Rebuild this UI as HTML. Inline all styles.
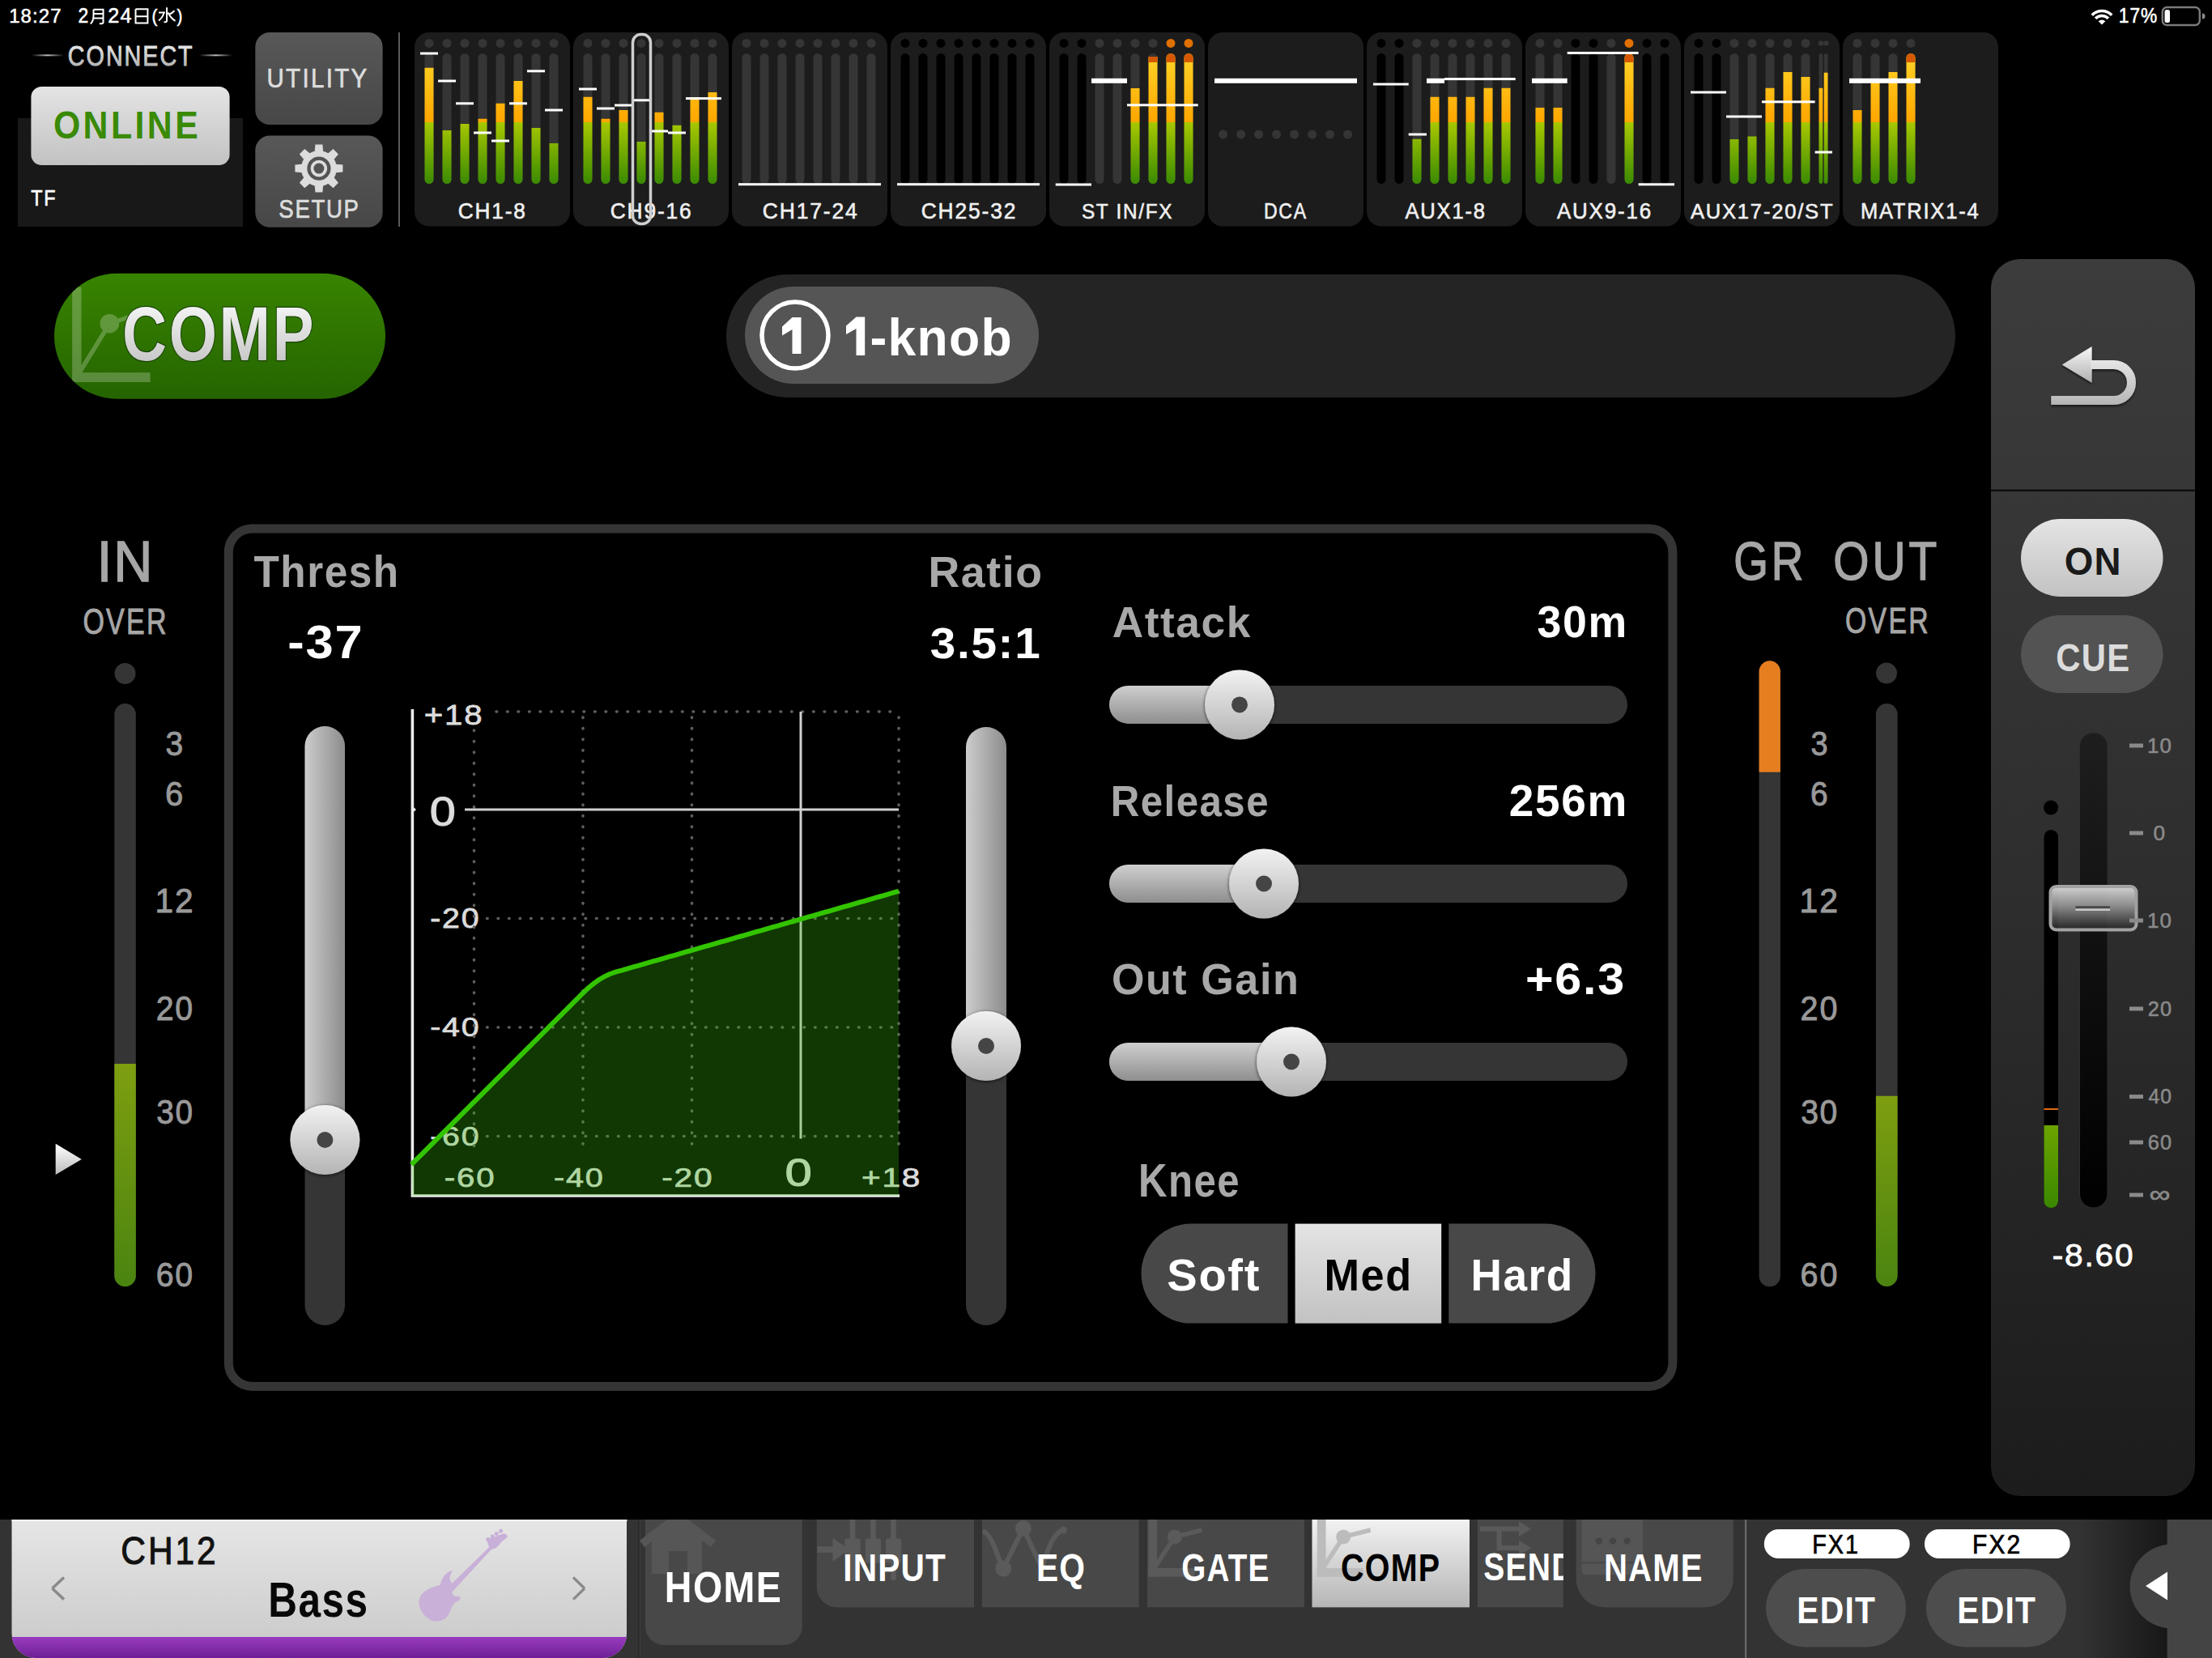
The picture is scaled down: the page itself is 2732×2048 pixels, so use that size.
<!DOCTYPE html>
<html><head><meta charset="utf-8"><style>
html,body{margin:0;padding:0;background:#000;}
body{width:2732px;height:2048px;overflow:hidden;}
svg{display:block;font-family:"Liberation Sans",sans-serif;}
</style></head><body>
<svg width="2732" height="2048" viewBox="0 0 2732 2048">
<defs><linearGradient id="gLight" x1="0" y1="0" x2="0" y2="1"><stop offset="0" stop-color="#e4e4e4"/><stop offset="1" stop-color="#c2c2c2"/></linearGradient>
<linearGradient id="gBtnDark" x1="0" y1="0" x2="0" y2="1"><stop offset="0" stop-color="#585858"/><stop offset="1" stop-color="#474747"/></linearGradient>
<linearGradient id="gCompPill" x1="0" y1="0" x2="0" y2="1"><stop offset="0" stop-color="#388400"/><stop offset="1" stop-color="#256400"/></linearGradient>
<linearGradient id="gCompTxt" x1="0" y1="0" x2="0" y2="1"><stop offset="0" stop-color="#ffffff"/><stop offset="1" stop-color="#bdbdbd"/></linearGradient>
<linearGradient id="gConnect" x1="0" y1="0" x2="0" y2="1"><stop offset="0" stop-color="#f4f4f4"/><stop offset="1" stop-color="#a8a8a8"/></linearGradient>
<linearGradient id="gMeter" x1="0" y1="66" x2="0" y2="227" gradientUnits="userSpaceOnUse"><stop offset="0" stop-color="#ffd426"/><stop offset="0.528" stop-color="#ffa600"/><stop offset="0.528" stop-color="#a8c800"/><stop offset="1" stop-color="#3a8a00"/></linearGradient>
<linearGradient id="gInMeter" x1="0" y1="0" x2="0" y2="1"><stop offset="0" stop-color="#7e9e10"/><stop offset="1" stop-color="#4a8410"/></linearGradient>
<linearGradient id="gSliderL" x1="0" y1="0" x2="0" y2="1"><stop offset="0" stop-color="#cfcfcf"/><stop offset="1" stop-color="#8e8e8e"/></linearGradient>
<linearGradient id="gVSlider" x1="0" y1="0" x2="1" y2="0"><stop offset="0" stop-color="#cccccc"/><stop offset="1" stop-color="#8c8c8c"/></linearGradient>
<linearGradient id="gKnob" x1="0" y1="0" x2="0" y2="1"><stop offset="0" stop-color="#f2f2f2"/><stop offset="1" stop-color="#b4b4b4"/></linearGradient>
<linearGradient id="gArrow" x1="0" y1="0" x2="0" y2="1"><stop offset="0" stop-color="#f8f8f8"/><stop offset="1" stop-color="#b0b0b0"/></linearGradient>
<linearGradient id="gRightPanel" x1="0" y1="0" x2="0" y2="1"><stop offset="0" stop-color="#3c3c3c"/><stop offset="0.5" stop-color="#2e2e2e"/><stop offset="1" stop-color="#1c1c1c"/></linearGradient>
<linearGradient id="gFaderKnob" x1="0" y1="0" x2="0" y2="1"><stop offset="0" stop-color="#c4c4c4"/><stop offset="0.5" stop-color="#6a6a6a"/><stop offset="0.75" stop-color="#363636"/><stop offset="1" stop-color="#5a5a5a"/></linearGradient>
<linearGradient id="gNameBar" x1="0" y1="0" x2="0" y2="1"><stop offset="0" stop-color="#e6e6e6"/><stop offset="1" stop-color="#c8c8c8"/></linearGradient>
<linearGradient id="gPurple" x1="0" y1="0" x2="0" y2="1"><stop offset="0" stop-color="#9a3cc0"/><stop offset="1" stop-color="#6e1e96"/></linearGradient>
<linearGradient id="gShadowR" x1="0" y1="0" x2="1" y2="0"><stop offset="0" stop-color="rgba(0,0,0,0)"/><stop offset="1" stop-color="rgba(0,0,0,0.55)"/></linearGradient>
<linearGradient id="gLineL" x1="0" y1="0" x2="1" y2="0"><stop offset="0" stop-color="rgba(200,200,200,0)"/><stop offset="0.5" stop-color="#bdbdbd"/><stop offset="1" stop-color="rgba(200,200,200,0)"/></linearGradient>
<linearGradient id="gArrowU" gradientUnits="userSpaceOnUse" x1="0" y1="428" x2="0" y2="500"><stop offset="0" stop-color="#f5f5f5"/><stop offset="1" stop-color="#b5b5b5"/></linearGradient>
<filter id="fShadow" x="-20%" y="-20%" width="140%" height="140%"><feGaussianBlur in="SourceAlpha" stdDeviation="1.5"/><feOffset dy="1.5"/><feComponentTransfer><feFuncA type="linear" slope="0.6"/></feComponentTransfer><feMerge><feMergeNode/><feMergeNode in="SourceGraphic"/></feMerge></filter>
<linearGradient id="gTrack" x1="0" y1="0" x2="0" y2="1"><stop offset="0" stop-color="#1e1e1e"/><stop offset="1" stop-color="#000000"/></linearGradient>
<linearGradient id="gFMeter" x1="0" y1="0" x2="0" y2="1"><stop offset="0" stop-color="#6ca400"/><stop offset="1" stop-color="#3a8800"/></linearGradient>
<linearGradient id="gFK2" x1="0" y1="0" x2="0" y2="1"><stop offset="0" stop-color="rgba(215,215,215,0.97)"/><stop offset="0.45" stop-color="rgba(150,150,150,0.9)"/><stop offset="1" stop-color="rgba(35,35,35,0.85)"/></linearGradient>
<linearGradient id="gTri" x1="0" y1="0" x2="0" y2="1"><stop offset="0" stop-color="#ffffff"/><stop offset="1" stop-color="#bcbcbc"/></linearGradient>
<filter id="fKnob" x="-30%" y="-30%" width="160%" height="160%"><feGaussianBlur in="SourceAlpha" stdDeviation="2"/><feOffset dy="1"/><feComponentTransfer><feFuncA type="linear" slope="0.7"/></feComponentTransfer><feMerge><feMergeNode/><feMergeNode in="SourceGraphic"/></feMerge></filter>
<linearGradient id="gNavSel" x1="0" y1="0" x2="0" y2="1"><stop offset="0" stop-color="#f2f2f2"/><stop offset="1" stop-color="#b6b6b6"/></linearGradient></defs>
<rect x="0" y="0" width="2732" height="2048" fill="#000"/>
<text transform="translate(11.20,27.95) scale(0.9774,1)" font-size="24.52" fill="#fff" letter-spacing="1.10" stroke="#fff" stroke-width="0.54">18:27</text>
<text transform="translate(96.46,28.20) scale(0.9189,1)" font-size="24.87" fill="#fff" letter-spacing="1.12" stroke="#fff" stroke-width="0.55">2</text>
<text transform="translate(133.24,28.20) scale(1.0148,1)" font-size="24.87" fill="#fff" letter-spacing="1.12" stroke="#fff" stroke-width="0.55">24</text>
<text transform="translate(187.51,26.78) scale(0.9049,1)" font-size="22.73" fill="#fff" letter-spacing="1.02" stroke="#fff" stroke-width="0.50">(</text>
<text transform="translate(218.45,26.78) scale(0.9049,1)" font-size="22.73" fill="#fff" letter-spacing="1.02" stroke="#fff" stroke-width="0.50">)</text>
<path d="M115.5,11.8 H127.5 V27.5 Q127.5,29.3 125.2,29.3 H122.8 M115.5,11.8 V19 Q115.5,26 111.8,29.5 M115.5,17 H127.5 M115.5,22.5 H127.5" fill="none" stroke="#fff" stroke-width="2"/>
<path d="M167.5,11.3 H182.4 V29.5 M167.5,11.3 V29.5 M167.5,20.2 H182.4 M167.5,28.5 H182.4" fill="none" stroke="#fff" stroke-width="2"/>
<path d="M206,9.2 V25.8 Q206,27.2 204.2,27.2 H202.5 M196,15.5 H202.8 Q200.5,22 196,25.5 M215.5,13.3 Q212.5,16.5 208.5,18 M207.5,15.5 Q210.5,22 216.5,25.8" fill="none" stroke="#fff" stroke-width="2"/>
<path d="M2583.77,18.69 A17.00,17.00 0 0 1 2608.23,18.69" fill="none" stroke="#fff" stroke-width="3.6"/>
<path d="M2588.09,22.86 A11.00,11.00 0 0 1 2603.91,22.86" fill="none" stroke="#fff" stroke-width="3.6"/>
<path d="M2596.00,30.50 L2591.70,26.20 A6,6 0 0 1 2600.30,26.20 Z" fill="#fff"/>
<text transform="translate(2616.80,28.07) scale(0.8988,1)" font-size="25.29" fill="#fff" letter-spacing="1.14" stroke="#fff" stroke-width="0.56">17%</text>
<rect x="2670.80" y="9.00" width="46.00" height="22.00" rx="5.50" fill="none" stroke="#7a7a7a" stroke-width="2.4"/>
<rect x="2673.50" y="12.00" width="6.50" height="16.00" rx="2.50" fill="#fff"/>
<path d="M2720,16.5 A3.5,3.5 0 0 1 2720,23.5 Z" fill="#8a8a8a"/>
<rect x="22.00" y="146.00" width="278.00" height="134.00" rx="0.00" fill="#181818"/>
<rect x="38.40" y="107.00" width="245.20" height="97.00" rx="13.00" fill="url(#gLight)"/>
<text transform="translate(65.89,171.31) scale(0.8804,1)" font-size="48.62" font-weight="bold" fill="#3a8a06" letter-spacing="3.89">ONLINE</text>
<text transform="translate(83.87,80.66) scale(0.8315,1)" font-size="34.49" fill="url(#gConnect)" letter-spacing="2.41" stroke="url(#gConnect)" stroke-width="0.9">CONNECT</text>
<rect x="38.80" y="67.30" width="40.00" height="2.00" rx="0.00" fill="url(#gLineL)"/>
<rect x="246.00" y="67.30" width="41.00" height="2.00" rx="0.00" fill="url(#gLineL)"/>
<text transform="translate(38.27,254.00) scale(0.8490,1)" font-size="27.64" fill="#fff" letter-spacing="1.93" stroke="#fff" stroke-width="0.61">TF</text>
<rect x="315.30" y="40.00" width="157.30" height="114.00" rx="18.00" fill="url(#gBtnDark)"/>
<text transform="translate(329.42,108.26) scale(0.8710,1)" font-size="33.84" fill="#dcdcdc" letter-spacing="2.71" stroke="#dcdcdc" stroke-width="0.74">UTILITY</text>
<rect x="315.30" y="167.40" width="157.30" height="113.40" rx="18.00" fill="url(#gBtnDark)"/>
<text transform="translate(344.36,269.38) scale(0.8595,1)" font-size="32.08" fill="#dcdcdc" letter-spacing="1.93" stroke="#dcdcdc" stroke-width="0.71">SETUP</text>
<g transform="translate(393.90,208.10)">
<path d="M-4.5,-29.5 H4.5 L5.5,-18 H-5.5 Z" fill="#dcdcdc" transform="rotate(0)"/>
<path d="M-4.5,-29.5 H4.5 L5.5,-18 H-5.5 Z" fill="#dcdcdc" transform="rotate(45)"/>
<path d="M-4.5,-29.5 H4.5 L5.5,-18 H-5.5 Z" fill="#dcdcdc" transform="rotate(90)"/>
<path d="M-4.5,-29.5 H4.5 L5.5,-18 H-5.5 Z" fill="#dcdcdc" transform="rotate(135)"/>
<path d="M-4.5,-29.5 H4.5 L5.5,-18 H-5.5 Z" fill="#dcdcdc" transform="rotate(180)"/>
<path d="M-4.5,-29.5 H4.5 L5.5,-18 H-5.5 Z" fill="#dcdcdc" transform="rotate(225)"/>
<path d="M-4.5,-29.5 H4.5 L5.5,-18 H-5.5 Z" fill="#dcdcdc" transform="rotate(270)"/>
<path d="M-4.5,-29.5 H4.5 L5.5,-18 H-5.5 Z" fill="#dcdcdc" transform="rotate(315)"/>
<circle cx="0.00" cy="0.00" r="22.00" fill="#dcdcdc"/>
<circle cx="0.00" cy="0.00" r="14.60" fill="#545454"/>
<circle cx="0.00" cy="0.00" r="10.30" fill="#dcdcdc"/>
<circle cx="0.00" cy="0.00" r="6.50" fill="#545454"/>
</g>
<rect x="492.00" y="40.00" width="2.00" height="240.00" rx="0.00" fill="#5a5a5a"/>
<rect x="512.00" y="40.00" width="192.00" height="239.50" rx="18.00" fill="#1c1c1c"/>
<rect x="708.00" y="40.00" width="192.00" height="239.50" rx="18.00" fill="#1c1c1c"/>
<rect x="904.00" y="40.00" width="192.00" height="239.50" rx="18.00" fill="#1c1c1c"/>
<rect x="1100.00" y="40.00" width="192.00" height="239.50" rx="18.00" fill="#1c1c1c"/>
<rect x="1296.00" y="40.00" width="192.00" height="239.50" rx="18.00" fill="#1c1c1c"/>
<rect x="1492.00" y="40.00" width="192.00" height="239.50" rx="18.00" fill="#1c1c1c"/>
<rect x="1688.00" y="40.00" width="192.00" height="239.50" rx="18.00" fill="#1c1c1c"/>
<rect x="1884.00" y="40.00" width="192.00" height="239.50" rx="18.00" fill="#1c1c1c"/>
<rect x="2080.00" y="40.00" width="192.00" height="239.50" rx="18.00" fill="#1c1c1c"/>
<rect x="2276.00" y="40.00" width="192.00" height="239.50" rx="18.00" fill="#1c1c1c"/>
<circle cx="530.00" cy="53.40" r="5.50" fill="#353535"/>
<rect x="524.50" y="66.00" width="11.00" height="161.00" rx="5.50" fill="#353535"/>
<path d="M524.50,83.80 H535.50 V221.50 A5.50,5.50 0 0 1 524.50,221.50 Z" fill="url(#gMeter)"/>
<circle cx="552.00" cy="53.40" r="5.50" fill="#353535"/>
<rect x="546.50" y="66.00" width="11.00" height="161.00" rx="5.50" fill="#353535"/>
<path d="M546.50,161.00 H557.50 V221.50 A5.50,5.50 0 0 1 546.50,221.50 Z" fill="url(#gMeter)"/>
<circle cx="574.00" cy="53.40" r="5.50" fill="#353535"/>
<rect x="568.50" y="66.00" width="11.00" height="161.00" rx="5.50" fill="#353535"/>
<path d="M568.50,153.00 H579.50 V221.50 A5.50,5.50 0 0 1 568.50,221.50 Z" fill="url(#gMeter)"/>
<circle cx="596.00" cy="53.40" r="5.50" fill="#353535"/>
<rect x="590.50" y="66.00" width="11.00" height="161.00" rx="5.50" fill="#353535"/>
<path d="M590.50,146.80 H601.50 V221.50 A5.50,5.50 0 0 1 590.50,221.50 Z" fill="url(#gMeter)"/>
<circle cx="618.00" cy="53.40" r="5.50" fill="#353535"/>
<rect x="612.50" y="66.00" width="11.00" height="161.00" rx="5.50" fill="#353535"/>
<path d="M612.50,127.80 H623.50 V221.50 A5.50,5.50 0 0 1 612.50,221.50 Z" fill="url(#gMeter)"/>
<circle cx="640.00" cy="53.40" r="5.50" fill="#353535"/>
<rect x="634.50" y="66.00" width="11.00" height="161.00" rx="5.50" fill="#353535"/>
<path d="M634.50,100.00 H645.50 V221.50 A5.50,5.50 0 0 1 634.50,221.50 Z" fill="url(#gMeter)"/>
<circle cx="662.00" cy="53.40" r="5.50" fill="#353535"/>
<rect x="656.50" y="66.00" width="11.00" height="161.00" rx="5.50" fill="#353535"/>
<path d="M656.50,158.00 H667.50 V221.50 A5.50,5.50 0 0 1 656.50,221.50 Z" fill="url(#gMeter)"/>
<circle cx="684.00" cy="53.40" r="5.50" fill="#353535"/>
<rect x="678.50" y="66.00" width="11.00" height="161.00" rx="5.50" fill="#353535"/>
<path d="M678.50,177.00 H689.50 V221.50 A5.50,5.50 0 0 1 678.50,221.50 Z" fill="url(#gMeter)"/>
<rect x="519.00" y="64.50" width="22.00" height="3.00" rx="0.00" fill="#ffffff"/>
<rect x="541.00" y="98.50" width="22.00" height="3.00" rx="0.00" fill="#ffffff"/>
<rect x="563.00" y="126.30" width="22.00" height="3.00" rx="0.00" fill="#ffffff"/>
<rect x="585.00" y="162.50" width="22.00" height="3.00" rx="0.00" fill="#ffffff"/>
<rect x="607.00" y="172.50" width="22.00" height="3.00" rx="0.00" fill="#ffffff"/>
<rect x="629.00" y="126.30" width="22.00" height="3.00" rx="0.00" fill="#ffffff"/>
<rect x="651.00" y="86.30" width="22.00" height="3.00" rx="0.00" fill="#ffffff"/>
<rect x="673.00" y="134.50" width="22.00" height="3.00" rx="0.00" fill="#ffffff"/>
<circle cx="726.00" cy="53.40" r="5.50" fill="#353535"/>
<rect x="720.50" y="66.00" width="11.00" height="161.00" rx="5.50" fill="#353535"/>
<path d="M720.50,119.80 H731.50 V221.50 A5.50,5.50 0 0 1 720.50,221.50 Z" fill="url(#gMeter)"/>
<circle cx="748.00" cy="53.40" r="5.50" fill="#353535"/>
<rect x="742.50" y="66.00" width="11.00" height="161.00" rx="5.50" fill="#353535"/>
<path d="M742.50,146.80 H753.50 V221.50 A5.50,5.50 0 0 1 742.50,221.50 Z" fill="url(#gMeter)"/>
<circle cx="770.00" cy="53.40" r="5.50" fill="#353535"/>
<rect x="764.50" y="66.00" width="11.00" height="161.00" rx="5.50" fill="#353535"/>
<path d="M764.50,136.00 H775.50 V221.50 A5.50,5.50 0 0 1 764.50,221.50 Z" fill="url(#gMeter)"/>
<circle cx="792.00" cy="53.40" r="5.50" fill="#353535"/>
<rect x="786.50" y="66.00" width="11.00" height="161.00" rx="5.50" fill="#353535"/>
<path d="M786.50,175.00 H797.50 V221.50 A5.50,5.50 0 0 1 786.50,221.50 Z" fill="url(#gMeter)"/>
<circle cx="814.00" cy="53.40" r="5.50" fill="#353535"/>
<rect x="808.50" y="66.00" width="11.00" height="161.00" rx="5.50" fill="#353535"/>
<path d="M808.50,138.80 H819.50 V221.50 A5.50,5.50 0 0 1 808.50,221.50 Z" fill="url(#gMeter)"/>
<circle cx="836.00" cy="53.40" r="5.50" fill="#353535"/>
<rect x="830.50" y="66.00" width="11.00" height="161.00" rx="5.50" fill="#353535"/>
<path d="M830.50,154.80 H841.50 V221.50 A5.50,5.50 0 0 1 830.50,221.50 Z" fill="url(#gMeter)"/>
<circle cx="858.00" cy="53.40" r="5.50" fill="#353535"/>
<rect x="852.50" y="66.00" width="11.00" height="161.00" rx="5.50" fill="#353535"/>
<path d="M852.50,120.00 H863.50 V221.50 A5.50,5.50 0 0 1 852.50,221.50 Z" fill="url(#gMeter)"/>
<circle cx="880.00" cy="53.40" r="5.50" fill="#353535"/>
<rect x="874.50" y="66.00" width="11.00" height="161.00" rx="5.50" fill="#353535"/>
<path d="M874.50,114.00 H885.50 V221.50 A5.50,5.50 0 0 1 874.50,221.50 Z" fill="url(#gMeter)"/>
<rect x="715.00" y="108.50" width="22.00" height="3.00" rx="0.00" fill="#ffffff"/>
<rect x="737.00" y="132.50" width="22.00" height="3.00" rx="0.00" fill="#ffffff"/>
<rect x="759.00" y="128.50" width="22.00" height="3.00" rx="0.00" fill="#ffffff"/>
<rect x="781.00" y="122.30" width="22.00" height="3.00" rx="0.00" fill="#ffffff"/>
<rect x="803.00" y="160.50" width="22.00" height="3.00" rx="0.00" fill="#ffffff"/>
<rect x="825.00" y="162.50" width="22.00" height="3.00" rx="0.00" fill="#ffffff"/>
<rect x="847.00" y="120.10" width="22.00" height="3.00" rx="0.00" fill="#ffffff"/>
<rect x="869.00" y="120.10" width="22.00" height="3.00" rx="0.00" fill="#ffffff"/>
<circle cx="922.00" cy="53.40" r="5.50" fill="#353535"/>
<rect x="916.50" y="66.00" width="11.00" height="161.00" rx="5.50" fill="#353535"/>
<circle cx="944.00" cy="53.40" r="5.50" fill="#353535"/>
<rect x="938.50" y="66.00" width="11.00" height="161.00" rx="5.50" fill="#353535"/>
<circle cx="966.00" cy="53.40" r="5.50" fill="#353535"/>
<rect x="960.50" y="66.00" width="11.00" height="161.00" rx="5.50" fill="#353535"/>
<circle cx="988.00" cy="53.40" r="5.50" fill="#353535"/>
<rect x="982.50" y="66.00" width="11.00" height="161.00" rx="5.50" fill="#353535"/>
<circle cx="1010.00" cy="53.40" r="5.50" fill="#353535"/>
<rect x="1004.50" y="66.00" width="11.00" height="161.00" rx="5.50" fill="#353535"/>
<circle cx="1032.00" cy="53.40" r="5.50" fill="#353535"/>
<rect x="1026.50" y="66.00" width="11.00" height="161.00" rx="5.50" fill="#353535"/>
<circle cx="1054.00" cy="53.40" r="5.50" fill="#353535"/>
<rect x="1048.50" y="66.00" width="11.00" height="161.00" rx="5.50" fill="#353535"/>
<circle cx="1076.00" cy="53.40" r="5.50" fill="#353535"/>
<rect x="1070.50" y="66.00" width="11.00" height="161.00" rx="5.50" fill="#353535"/>
<rect x="912.00" y="226.20" width="176.00" height="3.00" rx="0.00" fill="#ffffff"/>
<circle cx="1118.00" cy="53.40" r="5.50" fill="#000000"/>
<rect x="1112.50" y="66.00" width="11.00" height="161.00" rx="5.50" fill="#000000"/>
<circle cx="1140.00" cy="53.40" r="5.50" fill="#000000"/>
<rect x="1134.50" y="66.00" width="11.00" height="161.00" rx="5.50" fill="#000000"/>
<circle cx="1162.00" cy="53.40" r="5.50" fill="#000000"/>
<rect x="1156.50" y="66.00" width="11.00" height="161.00" rx="5.50" fill="#000000"/>
<circle cx="1184.00" cy="53.40" r="5.50" fill="#000000"/>
<rect x="1178.50" y="66.00" width="11.00" height="161.00" rx="5.50" fill="#000000"/>
<circle cx="1206.00" cy="53.40" r="5.50" fill="#000000"/>
<rect x="1200.50" y="66.00" width="11.00" height="161.00" rx="5.50" fill="#000000"/>
<circle cx="1228.00" cy="53.40" r="5.50" fill="#000000"/>
<rect x="1222.50" y="66.00" width="11.00" height="161.00" rx="5.50" fill="#000000"/>
<circle cx="1250.00" cy="53.40" r="5.50" fill="#000000"/>
<rect x="1244.50" y="66.00" width="11.00" height="161.00" rx="5.50" fill="#000000"/>
<circle cx="1272.00" cy="53.40" r="5.50" fill="#000000"/>
<rect x="1266.50" y="66.00" width="11.00" height="161.00" rx="5.50" fill="#000000"/>
<rect x="1108.00" y="226.20" width="176.00" height="3.00" rx="0.00" fill="#ffffff"/>
<circle cx="1314.00" cy="53.40" r="5.50" fill="#000000"/>
<rect x="1308.50" y="66.00" width="11.00" height="161.00" rx="5.50" fill="#000000"/>
<circle cx="1336.00" cy="53.40" r="5.50" fill="#000000"/>
<rect x="1330.50" y="66.00" width="11.00" height="161.00" rx="5.50" fill="#000000"/>
<circle cx="1358.00" cy="53.40" r="5.50" fill="#353535"/>
<rect x="1352.50" y="66.00" width="11.00" height="161.00" rx="5.50" fill="#353535"/>
<circle cx="1380.00" cy="53.40" r="5.50" fill="#353535"/>
<rect x="1374.50" y="66.00" width="11.00" height="161.00" rx="5.50" fill="#353535"/>
<circle cx="1402.00" cy="53.40" r="5.50" fill="#353535"/>
<rect x="1396.50" y="66.00" width="11.00" height="161.00" rx="5.50" fill="#353535"/>
<circle cx="1424.00" cy="53.40" r="5.50" fill="#353535"/>
<rect x="1418.50" y="66.00" width="11.00" height="161.00" rx="5.50" fill="#353535"/>
<circle cx="1446.00" cy="53.40" r="5.50" fill="#e07000"/>
<rect x="1440.50" y="66.00" width="11.00" height="161.00" rx="5.50" fill="#353535"/>
<circle cx="1468.00" cy="53.40" r="5.50" fill="#e07000"/>
<rect x="1462.50" y="66.00" width="11.00" height="161.00" rx="5.50" fill="#353535"/>
<path d="M1396.50,109.00 H1407.50 V221.50 A5.50,5.50 0 0 1 1396.50,221.50 Z" fill="url(#gMeter)"/>
<path d="M1418.50,70.00 H1429.50 V221.50 A5.50,5.50 0 0 1 1418.50,221.50 Z" fill="url(#gMeter)"/>
<path d="M1418.50,70 H1429.50 V77 H1418.50 Z" fill="#d65800"/>
<path d="M1440.50,71.50 A5.50,5.50 0 0 1 1451.50,71.50 V221.50 A5.50,5.50 0 0 1 1440.50,221.50 Z" fill="url(#gMeter)"/>
<path d="M1440.50,71.50 A5.50,5.50 0 0 1 1451.50,71.50 V77 H1440.50 Z" fill="#d65800"/>
<path d="M1462.50,71.50 A5.50,5.50 0 0 1 1473.50,71.50 V221.50 A5.50,5.50 0 0 1 1462.50,221.50 Z" fill="url(#gMeter)"/>
<path d="M1462.50,71.50 A5.50,5.50 0 0 1 1473.50,71.50 V77 H1462.50 Z" fill="#d65800"/>
<rect x="1348.00" y="96.80" width="44.00" height="6.00" rx="0.00" fill="#ffffff"/>
<rect x="1303.70" y="226.50" width="44.30" height="3.00" rx="0.00" fill="#ffffff"/>
<rect x="1392.00" y="128.30" width="87.70" height="3.00" rx="0.00" fill="#ffffff"/>
<rect x="1500.00" y="96.80" width="176.00" height="6.00" rx="0.00" fill="#ffffff"/>
<circle cx="1510.60" cy="166.00" r="5.50" fill="#353535"/>
<circle cx="1532.60" cy="166.00" r="5.50" fill="#353535"/>
<circle cx="1554.60" cy="166.00" r="5.50" fill="#353535"/>
<circle cx="1576.60" cy="166.00" r="5.50" fill="#353535"/>
<circle cx="1598.60" cy="166.00" r="5.50" fill="#353535"/>
<circle cx="1620.60" cy="166.00" r="5.50" fill="#353535"/>
<circle cx="1642.60" cy="166.00" r="5.50" fill="#353535"/>
<circle cx="1664.60" cy="166.00" r="5.50" fill="#353535"/>
<circle cx="1706.00" cy="53.40" r="5.50" fill="#000000"/>
<rect x="1700.50" y="66.00" width="11.00" height="161.00" rx="5.50" fill="#000000"/>
<circle cx="1728.00" cy="53.40" r="5.50" fill="#000000"/>
<rect x="1722.50" y="66.00" width="11.00" height="161.00" rx="5.50" fill="#000000"/>
<circle cx="1750.00" cy="53.40" r="5.50" fill="#353535"/>
<rect x="1744.50" y="66.00" width="11.00" height="161.00" rx="5.50" fill="#353535"/>
<circle cx="1772.00" cy="53.40" r="5.50" fill="#353535"/>
<rect x="1766.50" y="66.00" width="11.00" height="161.00" rx="5.50" fill="#353535"/>
<circle cx="1794.00" cy="53.40" r="5.50" fill="#353535"/>
<rect x="1788.50" y="66.00" width="11.00" height="161.00" rx="5.50" fill="#353535"/>
<circle cx="1816.00" cy="53.40" r="5.50" fill="#353535"/>
<rect x="1810.50" y="66.00" width="11.00" height="161.00" rx="5.50" fill="#353535"/>
<circle cx="1838.00" cy="53.40" r="5.50" fill="#353535"/>
<rect x="1832.50" y="66.00" width="11.00" height="161.00" rx="5.50" fill="#353535"/>
<circle cx="1860.00" cy="53.40" r="5.50" fill="#353535"/>
<rect x="1854.50" y="66.00" width="11.00" height="161.00" rx="5.50" fill="#353535"/>
<path d="M1744.50,171.80 H1755.50 V221.50 A5.50,5.50 0 0 1 1744.50,221.50 Z" fill="url(#gMeter)"/>
<path d="M1766.50,119.70 H1777.50 V221.50 A5.50,5.50 0 0 1 1766.50,221.50 Z" fill="url(#gMeter)"/>
<path d="M1788.50,119.70 H1799.50 V221.50 A5.50,5.50 0 0 1 1788.50,221.50 Z" fill="url(#gMeter)"/>
<path d="M1810.50,119.70 H1821.50 V221.50 A5.50,5.50 0 0 1 1810.50,221.50 Z" fill="url(#gMeter)"/>
<path d="M1832.50,108.80 H1843.50 V221.50 A5.50,5.50 0 0 1 1832.50,221.50 Z" fill="url(#gMeter)"/>
<path d="M1854.50,108.80 H1865.50 V221.50 A5.50,5.50 0 0 1 1854.50,221.50 Z" fill="url(#gMeter)"/>
<rect x="1696.00" y="102.50" width="43.70" height="3.00" rx="0.00" fill="#ffffff"/>
<rect x="1739.70" y="164.50" width="22.30" height="3.00" rx="0.00" fill="#ffffff"/>
<rect x="1762.00" y="96.80" width="22.00" height="6.00" rx="0.00" fill="#ffffff"/>
<rect x="1784.00" y="96.10" width="87.70" height="3.00" rx="0.00" fill="#ffffff"/>
<circle cx="1902.00" cy="53.40" r="5.50" fill="#353535"/>
<rect x="1896.50" y="66.00" width="11.00" height="161.00" rx="5.50" fill="#353535"/>
<circle cx="1924.00" cy="53.40" r="5.50" fill="#353535"/>
<rect x="1918.50" y="66.00" width="11.00" height="161.00" rx="5.50" fill="#353535"/>
<circle cx="1946.00" cy="53.40" r="5.50" fill="#000000"/>
<rect x="1940.50" y="66.00" width="11.00" height="161.00" rx="5.50" fill="#000000"/>
<circle cx="1968.00" cy="53.40" r="5.50" fill="#000000"/>
<rect x="1962.50" y="66.00" width="11.00" height="161.00" rx="5.50" fill="#000000"/>
<circle cx="1990.00" cy="53.40" r="5.50" fill="#353535"/>
<rect x="1984.50" y="66.00" width="11.00" height="161.00" rx="5.50" fill="#353535"/>
<circle cx="2012.00" cy="53.40" r="5.50" fill="#e07000"/>
<rect x="2006.50" y="66.00" width="11.00" height="161.00" rx="5.50" fill="#353535"/>
<circle cx="2034.00" cy="53.40" r="5.50" fill="#000000"/>
<rect x="2028.50" y="66.00" width="11.00" height="161.00" rx="5.50" fill="#000000"/>
<circle cx="2056.00" cy="53.40" r="5.50" fill="#000000"/>
<rect x="2050.50" y="66.00" width="11.00" height="161.00" rx="5.50" fill="#000000"/>
<path d="M1896.50,133.00 H1907.50 V221.50 A5.50,5.50 0 0 1 1896.50,221.50 Z" fill="url(#gMeter)"/>
<path d="M1918.50,133.00 H1929.50 V221.50 A5.50,5.50 0 0 1 1918.50,221.50 Z" fill="url(#gMeter)"/>
<path d="M2006.50,71.50 A5.50,5.50 0 0 1 2017.50,71.50 V221.50 A5.50,5.50 0 0 1 2006.50,221.50 Z" fill="url(#gMeter)"/>
<path d="M2006.50,71.50 A5.50,5.50 0 0 1 2017.50,71.50 V77 H2006.50 Z" fill="#d65800"/>
<rect x="1892.00" y="96.80" width="43.70" height="6.00" rx="0.00" fill="#ffffff"/>
<rect x="1935.70" y="63.90" width="87.90" height="3.00" rx="0.00" fill="#ffffff"/>
<rect x="2023.60" y="226.30" width="44.40" height="3.00" rx="0.00" fill="#ffffff"/>
<circle cx="2098.00" cy="53.40" r="5.50" fill="#000000"/>
<rect x="2092.50" y="66.00" width="11.00" height="161.00" rx="5.50" fill="#000000"/>
<circle cx="2120.00" cy="53.40" r="5.50" fill="#000000"/>
<rect x="2114.50" y="66.00" width="11.00" height="161.00" rx="5.50" fill="#000000"/>
<circle cx="2142.00" cy="53.40" r="5.50" fill="#353535"/>
<rect x="2136.50" y="66.00" width="11.00" height="161.00" rx="5.50" fill="#353535"/>
<circle cx="2164.00" cy="53.40" r="5.50" fill="#353535"/>
<rect x="2158.50" y="66.00" width="11.00" height="161.00" rx="5.50" fill="#353535"/>
<circle cx="2186.00" cy="53.40" r="5.50" fill="#353535"/>
<rect x="2180.50" y="66.00" width="11.00" height="161.00" rx="5.50" fill="#353535"/>
<circle cx="2208.00" cy="53.40" r="5.50" fill="#353535"/>
<rect x="2202.50" y="66.00" width="11.00" height="161.00" rx="5.50" fill="#353535"/>
<circle cx="2230.00" cy="53.40" r="5.50" fill="#353535"/>
<rect x="2224.50" y="66.00" width="11.00" height="161.00" rx="5.50" fill="#353535"/>
<circle cx="2249.00" cy="53.40" r="3.20" fill="#353535"/>
<circle cx="2255.50" cy="53.40" r="3.20" fill="#353535"/>
<rect x="2246.50" y="66.00" width="4.80" height="161.00" rx="2.40" fill="#353535"/>
<rect x="2252.70" y="66.00" width="4.80" height="161.00" rx="2.40" fill="#353535"/>
<path d="M2136.50,172.00 H2147.50 V221.50 A5.50,5.50 0 0 1 2136.50,221.50 Z" fill="url(#gMeter)"/>
<path d="M2158.50,168.50 H2169.50 V221.50 A5.50,5.50 0 0 1 2158.50,221.50 Z" fill="url(#gMeter)"/>
<path d="M2180.50,108.80 H2191.50 V221.50 A5.50,5.50 0 0 1 2180.50,221.50 Z" fill="url(#gMeter)"/>
<path d="M2202.50,89.00 H2213.50 V221.50 A5.50,5.50 0 0 1 2202.50,221.50 Z" fill="url(#gMeter)"/>
<path d="M2224.50,95.00 H2235.50 V221.50 A5.50,5.50 0 0 1 2224.50,221.50 Z" fill="url(#gMeter)"/>
<path d="M2246.50,108.80 H2251.30 V224.60 A2.40,2.40 0 0 1 2246.50,224.60 Z" fill="url(#gMeter)"/>
<path d="M2252.70,89.70 H2257.50 V224.60 A2.40,2.40 0 0 1 2252.70,224.60 Z" fill="url(#gMeter)"/>
<rect x="2088.00" y="112.50" width="44.00" height="3.00" rx="0.00" fill="#ffffff"/>
<rect x="2132.00" y="142.50" width="44.00" height="3.00" rx="0.00" fill="#ffffff"/>
<rect x="2176.00" y="124.30" width="65.60" height="3.00" rx="0.00" fill="#ffffff"/>
<rect x="2241.60" y="186.50" width="21.40" height="3.00" rx="0.00" fill="#ffffff"/>
<circle cx="2294.00" cy="53.40" r="5.50" fill="#353535"/>
<rect x="2288.50" y="66.00" width="11.00" height="161.00" rx="5.50" fill="#353535"/>
<circle cx="2316.00" cy="53.40" r="5.50" fill="#353535"/>
<rect x="2310.50" y="66.00" width="11.00" height="161.00" rx="5.50" fill="#353535"/>
<circle cx="2338.00" cy="53.40" r="5.50" fill="#353535"/>
<rect x="2332.50" y="66.00" width="11.00" height="161.00" rx="5.50" fill="#353535"/>
<circle cx="2360.00" cy="53.40" r="5.50" fill="#353535"/>
<rect x="2354.50" y="66.00" width="11.00" height="161.00" rx="5.50" fill="#353535"/>
<path d="M2288.50,136.00 H2299.50 V221.50 A5.50,5.50 0 0 1 2288.50,221.50 Z" fill="url(#gMeter)"/>
<path d="M2310.50,102.00 H2321.50 V221.50 A5.50,5.50 0 0 1 2310.50,221.50 Z" fill="url(#gMeter)"/>
<path d="M2332.50,89.00 H2343.50 V221.50 A5.50,5.50 0 0 1 2332.50,221.50 Z" fill="url(#gMeter)"/>
<path d="M2354.50,71.50 A5.50,5.50 0 0 1 2365.50,71.50 V221.50 A5.50,5.50 0 0 1 2354.50,221.50 Z" fill="url(#gMeter)"/>
<path d="M2354.50,71.50 A5.50,5.50 0 0 1 2365.50,71.50 V77 H2354.50 Z" fill="#d65800"/>
<rect x="2284.00" y="96.80" width="88.00" height="6.00" rx="0.00" fill="#ffffff"/>
<text transform="translate(565.69,269.53) scale(0.9709,1)" font-size="27.00" fill="#f0f0f0" letter-spacing="1.89" stroke="#f0f0f0" stroke-width="0.59">CH1-8</text>
<text transform="translate(753.68,269.53) scale(0.9764,1)" font-size="27.00" fill="#f0f0f0" letter-spacing="1.89" stroke="#f0f0f0" stroke-width="0.59">CH9-16</text>
<text transform="translate(941.68,269.53) scale(0.9810,1)" font-size="27.00" fill="#f0f0f0" letter-spacing="1.89" stroke="#f0f0f0" stroke-width="0.59">CH17-24</text>
<text transform="translate(1137.68,269.53) scale(0.9775,1)" font-size="27.00" fill="#f0f0f0" letter-spacing="1.89" stroke="#f0f0f0" stroke-width="0.59">CH25-32</text>
<text transform="translate(1335.90,269.54) scale(0.9370,1)" font-size="25.99" fill="#f0f0f0" letter-spacing="1.82" stroke="#f0f0f0" stroke-width="0.57">ST IN/FX</text>
<text transform="translate(1561.10,269.53) scale(0.8545,1)" font-size="27.00" fill="#f0f0f0" letter-spacing="1.89" stroke="#f0f0f0" stroke-width="0.59">DCA</text>
<text transform="translate(1735.44,269.53) scale(0.9492,1)" font-size="27.00" fill="#f0f0f0" letter-spacing="1.89" stroke="#f0f0f0" stroke-width="0.59">AUX1-8</text>
<text transform="translate(1922.94,269.53) scale(0.9610,1)" font-size="27.00" fill="#f0f0f0" letter-spacing="1.89" stroke="#f0f0f0" stroke-width="0.59">AUX9-16</text>
<text transform="translate(2087.94,269.54) scale(0.9842,1)" font-size="25.99" fill="#f0f0f0" letter-spacing="1.82" stroke="#f0f0f0" stroke-width="0.57">AUX17-20/ST</text>
<text transform="translate(2297.89,269.80) scale(0.9196,1)" font-size="27.78" fill="#f0f0f0" letter-spacing="1.94" stroke="#f0f0f0" stroke-width="0.61">MATRIX1-4</text>
<rect x="781.50" y="42.50" width="22.00" height="234.00" rx="10.00" fill="none" stroke="#cfcfcf" stroke-width="3.5"/>
<rect x="67.00" y="337.70" width="409.00" height="155.00" rx="77.50" fill="url(#gCompPill)"/>
<clipPath id="cpPill"><rect x="67" y="337.7" width="409" height="155" rx="77.5"/></clipPath>
<g opacity="0.24" clip-path="url(#cpPill)">
<rect x="89.20" y="354.60" width="11.30" height="117.40" rx="0.00" fill="#fff"/>
<rect x="89.20" y="460.20" width="96.40" height="11.80" rx="0.00" fill="#fff"/>
<path d="M97,462 L135.3,399.7 L170,388" fill="none" stroke="#fff" stroke-width="5.5"/>
<circle cx="135.30" cy="399.70" r="11.80" fill="#fff"/>
</g>
<text transform="translate(150.95,444.66) scale(0.8099,1)" font-size="94.13" font-weight="bold" fill="url(#gCompTxt)" letter-spacing="3.29" stroke="#1a4400" stroke-width="2.5" paint-order="stroke">COMP</text>
<rect x="897.00" y="339.00" width="1518.00" height="152.00" rx="76.00" fill="#242424"/>
<rect x="920.00" y="354.00" width="363.00" height="120.00" rx="60.00" fill="#555555"/>
<circle cx="982.00" cy="414.00" r="41.00" fill="none" stroke="#fff" stroke-width="5.5"/>
<path d="M978.5,392 H989.5 V437 H978.5 V407 L966,414.5 V403.5 Z" fill="#fff"/>
<path d="M1057.5,391.5 H1068.2 V439 H1057.5 V406 L1045,413 V402.5 Z" fill="#fff"/>
<text transform="translate(1074.50,439.00) scale(0.9539,1)" font-size="65.52" font-weight="bold" fill="#fff" letter-spacing="1.31">-knob</text>
<path d="M2459,1848 V356 A36,36 0 0 1 2495,320 H2675 A36,36 0 0 1 2711,356 V1812 A36,36 0 0 1 2675,1848 H2495 A36,36 0 0 1 2459,1812 Z" fill="url(#gRightPanel)"/>
<rect x="2459.00" y="604.70" width="252.00" height="2.20" rx="0.00" fill="#0a0a0a"/>
<g filter="url(#fShadow)">
<path d="M2546.8,450.4 L2583.6,428.1 V472.7 Z" fill="url(#gArrow)"/>
<path d="M2582,450.5 H2610.5 A22,22 0 0 1 2610.5,494.5 H2533.3" fill="none" stroke="url(#gArrowU)" stroke-width="11"/>
</g>
<rect x="2496.00" y="641.00" width="175.50" height="96.00" rx="48.00" fill="url(#gLight)"/>
<text transform="translate(2549.67,710.01) scale(0.9371,1)" font-size="48.76" font-weight="bold" fill="#1a1a1a" letter-spacing="1.46">ON</text>
<rect x="2496.00" y="760.00" width="175.50" height="96.00" rx="48.00" fill="#535353"/>
<text transform="translate(2539.33,828.51) scale(0.8575,1)" font-size="48.76" font-weight="bold" fill="#dcdcdc" letter-spacing="1.46">CUE</text>
<rect x="2568.50" y="905.00" width="34.50" height="587.00" rx="17.00" fill="url(#gTrack)" stroke="#2e2e2e" stroke-width="1"/>
<circle cx="2533.00" cy="997.60" r="9.00" fill="#000"/>
<rect x="2524.50" y="1025.00" width="17.50" height="467.00" rx="8.75" fill="#000"/>
<path d="M2524.5,1390 H2542 V1483.25 A8.75,8.75 0 0 1 2524.5,1483.25 Z" fill="url(#gFMeter)"/>
<rect x="2524.50" y="1369.00" width="17.50" height="2.00" rx="0.00" fill="#e06a10"/>
<rect x="2532.50" y="1095.00" width="106.00" height="53.50" rx="7.00" fill="url(#gFK2)" stroke="#a2a2a2" stroke-width="4"/>
<rect x="2563.50" y="1119.30" width="42.50" height="2.60" rx="0.00" fill="#454545"/>
<rect x="2563.50" y="1122.40" width="42.50" height="2.60" rx="0.00" fill="#c4c4c4"/>
<rect x="2630.00" y="918.50" width="17.00" height="5.00" rx="0.00" fill="#8a8a8a"/>
<text transform="translate(2652.06,929.75) scale(1.0180,1)" font-size="25.44" fill="#8a8a8a" letter-spacing="1.14" stroke="#8a8a8a" stroke-width="0.56">10</text>
<rect x="2630.00" y="1026.50" width="17.00" height="5.00" rx="0.00" fill="#8a8a8a"/>
<text transform="translate(2659.45,1037.75) scale(1.0289,1)" font-size="25.44" fill="#8a8a8a" letter-spacing="1.14" stroke="#8a8a8a" stroke-width="0.56">0</text>
<rect x="2630.00" y="1134.50" width="17.00" height="5.00" rx="0.00" fill="#8a8a8a"/>
<text transform="translate(2652.06,1145.75) scale(1.0180,1)" font-size="25.44" fill="#8a8a8a" letter-spacing="1.14" stroke="#8a8a8a" stroke-width="0.56">10</text>
<rect x="2630.00" y="1243.50" width="17.00" height="5.00" rx="0.00" fill="#8a8a8a"/>
<text transform="translate(2652.74,1254.75) scale(0.9941,1)" font-size="25.44" fill="#8a8a8a" letter-spacing="1.14" stroke="#8a8a8a" stroke-width="0.56">20</text>
<rect x="2630.00" y="1352.10" width="17.00" height="5.00" rx="0.00" fill="#8a8a8a"/>
<text transform="translate(2653.45,1363.35) scale(0.9692,1)" font-size="25.44" fill="#8a8a8a" letter-spacing="1.14" stroke="#8a8a8a" stroke-width="0.56">40</text>
<rect x="2630.00" y="1408.50" width="17.00" height="5.00" rx="0.00" fill="#8a8a8a"/>
<text transform="translate(2652.74,1419.75) scale(0.9941,1)" font-size="25.44" fill="#8a8a8a" letter-spacing="1.14" stroke="#8a8a8a" stroke-width="0.56">60</text>
<rect x="2630.00" y="1473.50" width="17.00" height="5.00" rx="0.00" fill="#8a8a8a"/>
<text transform="translate(2654.44,1484.89) scale(1.2662,1)" font-size="28.95" fill="#8a8a8a" letter-spacing="1.30" stroke="#8a8a8a" stroke-width="0.64">∞</text>
<text transform="translate(2534.77,1563.61) scale(1.0519,1)" font-size="38.59" fill="#fff" letter-spacing="1.74" stroke="#fff" stroke-width="0.85">-8.60</text>
<rect x="282.30" y="653.00" width="1783.60" height="1059.40" rx="29.00" fill="none" stroke="#353535" stroke-width="11"/>
<text transform="translate(119.83,718.00) scale(0.9489,1)" font-size="70.25" fill="#a6a6a6" letter-spacing="2.11" stroke="#a6a6a6" stroke-width="1.55">IN</text>
<text transform="translate(102.39,782.55) scale(0.7495,1)" font-size="45.23" fill="#a6a6a6" letter-spacing="3.17" stroke="#a6a6a6" stroke-width="1.00">OVER</text>
<circle cx="154.50" cy="832.00" r="13.00" fill="#353535"/>
<rect x="141.30" y="869.00" width="26.50" height="720.00" rx="13.25" fill="#353535"/>
<path d="M141.3,1314 H167.8 V1576 A13.25,13.25 0 0 1 141.3,1576 Z" fill="url(#gInMeter)"/>
<path d="M68.7,1412.8 L100.8,1432 L68.7,1451 Z" fill="url(#gTri)"/>
<text transform="translate(204.54,933.08) scale(0.9185,1)" font-size="42.40" fill="#999" letter-spacing="1.91" stroke="#999" stroke-width="0.93">3</text>
<text transform="translate(204.00,994.58) scale(0.9433,1)" font-size="42.40" fill="#999" letter-spacing="1.91" stroke="#999" stroke-width="0.93">6</text>
<text transform="translate(191.55,1127.30) scale(0.9618,1)" font-size="42.29" fill="#999" letter-spacing="1.90" stroke="#999" stroke-width="0.93">12</text>
<text transform="translate(192.64,1259.58) scale(0.9413,1)" font-size="41.70" fill="#999" letter-spacing="1.88" stroke="#999" stroke-width="0.92">20</text>
<text transform="translate(193.15,1387.88) scale(0.9305,1)" font-size="41.70" fill="#999" letter-spacing="1.88" stroke="#999" stroke-width="0.92">30</text>
<text transform="translate(192.64,1588.78) scale(0.9413,1)" font-size="41.70" fill="#999" letter-spacing="1.88" stroke="#999" stroke-width="0.92">60</text>
<text transform="translate(2141.26,716.33) scale(0.8208,1)" font-size="66.86" fill="#a6a6a6" letter-spacing="4.68" stroke="#a6a6a6" stroke-width="1.47">GR</text>
<text transform="translate(2264.30,716.33) scale(0.8508,1)" font-size="66.86" fill="#a6a6a6" letter-spacing="4.68" stroke="#a6a6a6" stroke-width="1.47">OUT</text>
<text transform="translate(2279.00,781.56) scale(0.7690,1)" font-size="43.82" fill="#a6a6a6" letter-spacing="3.07" stroke="#a6a6a6" stroke-width="0.96">OVER</text>
<circle cx="2330.00" cy="831.50" r="13.00" fill="#353535"/>
<rect x="2172.60" y="816.30" width="26.30" height="773.00" rx="13.15" fill="#353535"/>
<path d="M2172.6,829.45 A13.15,13.15 0 0 1 2198.9,829.45 V953.7 H2172.6 Z" fill="#e67e1f"/>
<rect x="2316.90" y="869.00" width="26.70" height="720.00" rx="13.35" fill="#353535"/>
<path d="M2316.9,1353.7 H2343.6 V1575.65 A13.35,13.35 0 0 1 2316.9,1575.65 Z" fill="url(#gInMeter)"/>
<text transform="translate(2236.58,932.58) scale(0.8937,1)" font-size="42.40" fill="#999" letter-spacing="1.91" stroke="#999" stroke-width="0.93">3</text>
<text transform="translate(2236.05,994.58) scale(0.9178,1)" font-size="42.40" fill="#999" letter-spacing="1.91" stroke="#999" stroke-width="0.93">6</text>
<text transform="translate(2222.53,1127.30) scale(0.9687,1)" font-size="42.29" fill="#999" letter-spacing="1.90" stroke="#999" stroke-width="0.93">12</text>
<text transform="translate(2223.62,1259.58) scale(0.9481,1)" font-size="41.70" fill="#999" letter-spacing="1.88" stroke="#999" stroke-width="0.92">20</text>
<text transform="translate(2224.13,1387.88) scale(0.9371,1)" font-size="41.70" fill="#999" letter-spacing="1.88" stroke="#999" stroke-width="0.92">30</text>
<text transform="translate(2223.62,1588.78) scale(0.9481,1)" font-size="41.70" fill="#999" letter-spacing="1.88" stroke="#999" stroke-width="0.92">60</text>
<text transform="translate(313.49,725.44) scale(0.9126,1)" font-size="56.19" font-weight="bold" fill="#a8a8a8" letter-spacing="1.69">Thresh</text>
<text transform="translate(355.25,813.28) scale(1.0628,1)" font-size="57.75" font-weight="bold" fill="#fff" letter-spacing="1.73">-37</text>
<rect x="376.50" y="897.00" width="49.50" height="740.00" rx="24.75" fill="#353535"/>
<path d="M376.5,1408 V921.75 A24.75,24.75 0 0 1 426,921.75 V1408 Z" fill="url(#gVSlider)"/>
<text transform="translate(1146.38,724.96) scale(0.9888,1)" font-size="54.29" font-weight="bold" fill="#a8a8a8" letter-spacing="1.63">Ratio</text>
<text transform="translate(1148.73,813.02) scale(1.0394,1)" font-size="54.51" font-weight="bold" fill="#fff" letter-spacing="1.64">3.5:1</text>
<rect x="1193.00" y="898.00" width="50.00" height="739.00" rx="25.00" fill="#353535"/>
<path d="M1193,1292 V923 A25,25 0 0 1 1243,923 V1292 Z" fill="url(#gVSlider)"/>
<g filter="url(#fKnob)">
<circle cx="401.40" cy="1408.00" r="43.00" fill="url(#gKnob)"/>
</g>
<circle cx="401.40" cy="1408.00" r="10.00" fill="#454545"/>
<g filter="url(#fKnob)">
<circle cx="1218.00" cy="1292.00" r="43.00" fill="url(#gKnob)"/>
</g>
<circle cx="1218.00" cy="1292.00" r="10.00" fill="#454545"/>
<text transform="translate(523.79,894.64) scale(1.1175,1)" font-size="35.90" fill="#dcdcdc" letter-spacing="1.62" stroke="#dcdcdc" stroke-width="0.79">+18</text>
<text transform="translate(530.70,1020.00) scale(1.1478,1)" font-size="50.18" fill="#dcdcdc" letter-spacing="2.26" stroke="#dcdcdc" stroke-width="1.10">0</text>
<text transform="translate(531.23,1146.36) scale(1.1473,1)" font-size="34.20" fill="#dcdcdc" letter-spacing="1.54" stroke="#dcdcdc" stroke-width="0.75">-20</text>
<text transform="translate(531.23,1280.16) scale(1.1568,1)" font-size="33.92" fill="#dcdcdc" letter-spacing="1.53" stroke="#dcdcdc" stroke-width="0.75">-40</text>
<text transform="translate(531.23,1414.66) scale(1.1568,1)" font-size="33.92" fill="#dcdcdc" letter-spacing="1.53" stroke="#dcdcdc" stroke-width="0.75">-60</text>
<text transform="translate(548.79,1465.66) scale(1.1853,1)" font-size="33.92" fill="#dcdcdc" letter-spacing="1.53" stroke="#dcdcdc" stroke-width="0.75">-60</text>
<text transform="translate(684.02,1465.66) scale(1.1690,1)" font-size="33.92" fill="#dcdcdc" letter-spacing="1.53" stroke="#dcdcdc" stroke-width="0.75">-40</text>
<text transform="translate(817.17,1465.66) scale(1.1974,1)" font-size="33.92" fill="#dcdcdc" letter-spacing="1.53" stroke="#dcdcdc" stroke-width="0.75">-20</text>
<text transform="translate(969.60,1464.93) scale(1.2687,1)" font-size="47.21" fill="#dcdcdc" letter-spacing="2.12" stroke="#dcdcdc" stroke-width="1.04">0</text>
<text transform="translate(1063.97,1465.66) scale(1.1948,1)" font-size="33.92" fill="#dcdcdc" letter-spacing="1.53" stroke="#dcdcdc" stroke-width="0.75">+18</text>
<path d="M585.50,902.00 V1420.00" fill="none" stroke="#5e5e5e" stroke-width="3.6" stroke-dasharray="0.6,12.9" stroke-linecap="round"/>
<path d="M720.00,886.00 V1420.00" fill="none" stroke="#5e5e5e" stroke-width="3.6" stroke-dasharray="0.6,12.9" stroke-linecap="round"/>
<path d="M854.50,886.00 V1420.00" fill="none" stroke="#5e5e5e" stroke-width="3.6" stroke-dasharray="0.6,12.9" stroke-linecap="round"/>
<path d="M1110.05,886.00 V1420.00" fill="none" stroke="#5e5e5e" stroke-width="3.6" stroke-dasharray="0.6,12.9" stroke-linecap="round"/>
<path d="M613,878.95 H1110" fill="none" stroke="#5e5e5e" stroke-width="3.6" stroke-dasharray="0.6,12.9" stroke-linecap="round"/>
<path d="M601.5,1134.50 H1110" fill="none" stroke="#5e5e5e" stroke-width="3.6" stroke-dasharray="0.6,12.9" stroke-linecap="round"/>
<path d="M601.5,1269.00 H1110" fill="none" stroke="#5e5e5e" stroke-width="3.6" stroke-dasharray="0.6,12.9" stroke-linecap="round"/>
<path d="M601.5,1403.50 H1110" fill="none" stroke="#5e5e5e" stroke-width="3.6" stroke-dasharray="0.6,12.9" stroke-linecap="round"/>
<path d="M574,1000 H1110" fill="none" stroke="#cfcfcf" stroke-width="3"/>
<path d="M989,879 V1406.6" fill="none" stroke="#cfcfcf" stroke-width="3"/>
<path d="M509.4,876 V1477 H1111" fill="none" stroke="#ececec" stroke-width="3.6"/>
<path d="M509,995.5 L514,1000 L509,1004.5 Z" fill="#ececec"/>
<path d="M508.16,1438.47 L511.53,1435.11 L514.89,1431.74 L518.25,1428.38 L521.61,1425.02 L524.98,1421.66 L528.34,1418.30 L531.70,1414.93 L535.06,1411.57 L538.42,1408.21 L541.79,1404.85 L545.15,1401.48 L548.51,1398.12 L551.88,1394.76 L555.24,1391.39 L558.60,1388.03 L561.96,1384.67 L565.33,1381.31 L568.69,1377.94 L572.05,1374.58 L575.41,1371.22 L578.78,1367.86 L582.14,1364.49 L585.50,1361.13 L588.86,1357.77 L592.23,1354.41 L595.59,1351.05 L598.95,1347.68 L602.31,1344.32 L605.67,1340.96 L609.04,1337.60 L612.40,1334.23 L615.76,1330.87 L619.12,1327.51 L622.49,1324.14 L625.85,1320.78 L629.21,1317.42 L632.58,1314.06 L635.94,1310.69 L639.30,1307.33 L642.66,1303.97 L646.03,1300.61 L649.39,1297.24 L652.75,1293.88 L656.11,1290.52 L659.48,1287.16 L662.84,1283.80 L666.20,1280.43 L669.56,1277.07 L672.92,1273.71 L676.29,1270.35 L679.65,1266.98 L683.01,1263.62 L686.38,1260.26 L689.74,1256.89 L693.10,1253.53 L696.46,1250.17 L699.83,1246.81 L703.19,1243.44 L706.55,1240.08 L709.91,1236.72 L713.28,1233.36 L716.64,1229.99 L720.00,1226.63 L723.36,1223.37 L726.73,1220.31 L730.09,1217.45 L733.45,1214.78 L736.81,1212.32 L740.17,1210.06 L743.54,1208.00 L746.90,1206.14 L750.26,1204.48 L753.62,1203.01 L756.99,1201.75 L760.35,1200.69 L763.71,1199.73 L767.08,1198.77 L770.44,1197.81 L773.80,1196.85 L777.16,1195.89 L780.52,1194.93 L783.89,1193.97 L787.25,1193.01 L790.61,1192.05 L793.98,1191.09 L797.34,1190.13 L800.70,1189.16 L804.06,1188.20 L807.42,1187.24 L810.79,1186.28 L814.15,1185.32 L817.51,1184.36 L820.88,1183.40 L824.24,1182.44 L827.60,1181.48 L830.96,1180.52 L834.33,1179.56 L837.69,1178.60 L841.05,1177.64 L844.41,1176.68 L847.77,1175.71 L851.14,1174.75 L854.50,1173.79 L857.86,1172.83 L861.23,1171.87 L864.59,1170.91 L867.95,1169.95 L871.31,1168.99 L874.67,1168.03 L878.04,1167.07 L881.40,1166.11 L884.76,1165.15 L888.12,1164.19 L891.49,1163.23 L894.85,1162.26 L898.21,1161.30 L901.58,1160.34 L904.94,1159.38 L908.30,1158.42 L911.66,1157.46 L915.02,1156.50 L918.39,1155.54 L921.75,1154.58 L925.11,1153.62 L928.48,1152.66 L931.84,1151.70 L935.20,1150.74 L938.56,1149.78 L941.92,1148.81 L945.29,1147.85 L948.65,1146.89 L952.01,1145.93 L955.38,1144.97 L958.74,1144.01 L962.10,1143.05 L965.46,1142.09 L968.83,1141.13 L972.19,1140.17 L975.55,1139.21 L978.91,1138.25 L982.27,1137.29 L985.64,1136.33 L989.00,1135.36 L992.36,1134.40 L995.73,1133.44 L999.09,1132.48 L1002.45,1131.52 L1005.81,1130.56 L1009.17,1129.60 L1012.54,1128.64 L1015.90,1127.68 L1019.26,1126.72 L1022.62,1125.76 L1025.99,1124.80 L1029.35,1123.84 L1032.71,1122.88 L1036.08,1121.91 L1039.44,1120.95 L1042.80,1119.99 L1046.16,1119.03 L1049.53,1118.07 L1052.89,1117.11 L1056.25,1116.15 L1059.61,1115.19 L1062.97,1114.23 L1066.34,1113.27 L1069.70,1112.31 L1073.06,1111.35 L1076.42,1110.39 L1079.79,1109.43 L1083.15,1108.46 L1086.51,1107.50 L1089.88,1106.54 L1093.24,1105.58 L1096.60,1104.62 L1099.96,1103.66 L1103.33,1102.70 L1106.69,1101.74 L1110.05,1100.78 L1110.05,1477 L509.4,1477 Z" fill="rgba(60,200,10,0.28)"/>
<path d="M508.16,1438.47 L511.53,1435.11 L514.89,1431.74 L518.25,1428.38 L521.61,1425.02 L524.98,1421.66 L528.34,1418.30 L531.70,1414.93 L535.06,1411.57 L538.42,1408.21 L541.79,1404.85 L545.15,1401.48 L548.51,1398.12 L551.88,1394.76 L555.24,1391.39 L558.60,1388.03 L561.96,1384.67 L565.33,1381.31 L568.69,1377.94 L572.05,1374.58 L575.41,1371.22 L578.78,1367.86 L582.14,1364.49 L585.50,1361.13 L588.86,1357.77 L592.23,1354.41 L595.59,1351.05 L598.95,1347.68 L602.31,1344.32 L605.67,1340.96 L609.04,1337.60 L612.40,1334.23 L615.76,1330.87 L619.12,1327.51 L622.49,1324.14 L625.85,1320.78 L629.21,1317.42 L632.58,1314.06 L635.94,1310.69 L639.30,1307.33 L642.66,1303.97 L646.03,1300.61 L649.39,1297.24 L652.75,1293.88 L656.11,1290.52 L659.48,1287.16 L662.84,1283.80 L666.20,1280.43 L669.56,1277.07 L672.92,1273.71 L676.29,1270.35 L679.65,1266.98 L683.01,1263.62 L686.38,1260.26 L689.74,1256.89 L693.10,1253.53 L696.46,1250.17 L699.83,1246.81 L703.19,1243.44 L706.55,1240.08 L709.91,1236.72 L713.28,1233.36 L716.64,1229.99 L720.00,1226.63 L723.36,1223.37 L726.73,1220.31 L730.09,1217.45 L733.45,1214.78 L736.81,1212.32 L740.17,1210.06 L743.54,1208.00 L746.90,1206.14 L750.26,1204.48 L753.62,1203.01 L756.99,1201.75 L760.35,1200.69 L763.71,1199.73 L767.08,1198.77 L770.44,1197.81 L773.80,1196.85 L777.16,1195.89 L780.52,1194.93 L783.89,1193.97 L787.25,1193.01 L790.61,1192.05 L793.98,1191.09 L797.34,1190.13 L800.70,1189.16 L804.06,1188.20 L807.42,1187.24 L810.79,1186.28 L814.15,1185.32 L817.51,1184.36 L820.88,1183.40 L824.24,1182.44 L827.60,1181.48 L830.96,1180.52 L834.33,1179.56 L837.69,1178.60 L841.05,1177.64 L844.41,1176.68 L847.77,1175.71 L851.14,1174.75 L854.50,1173.79 L857.86,1172.83 L861.23,1171.87 L864.59,1170.91 L867.95,1169.95 L871.31,1168.99 L874.67,1168.03 L878.04,1167.07 L881.40,1166.11 L884.76,1165.15 L888.12,1164.19 L891.49,1163.23 L894.85,1162.26 L898.21,1161.30 L901.58,1160.34 L904.94,1159.38 L908.30,1158.42 L911.66,1157.46 L915.02,1156.50 L918.39,1155.54 L921.75,1154.58 L925.11,1153.62 L928.48,1152.66 L931.84,1151.70 L935.20,1150.74 L938.56,1149.78 L941.92,1148.81 L945.29,1147.85 L948.65,1146.89 L952.01,1145.93 L955.38,1144.97 L958.74,1144.01 L962.10,1143.05 L965.46,1142.09 L968.83,1141.13 L972.19,1140.17 L975.55,1139.21 L978.91,1138.25 L982.27,1137.29 L985.64,1136.33 L989.00,1135.36 L992.36,1134.40 L995.73,1133.44 L999.09,1132.48 L1002.45,1131.52 L1005.81,1130.56 L1009.17,1129.60 L1012.54,1128.64 L1015.90,1127.68 L1019.26,1126.72 L1022.62,1125.76 L1025.99,1124.80 L1029.35,1123.84 L1032.71,1122.88 L1036.08,1121.91 L1039.44,1120.95 L1042.80,1119.99 L1046.16,1119.03 L1049.53,1118.07 L1052.89,1117.11 L1056.25,1116.15 L1059.61,1115.19 L1062.97,1114.23 L1066.34,1113.27 L1069.70,1112.31 L1073.06,1111.35 L1076.42,1110.39 L1079.79,1109.43 L1083.15,1108.46 L1086.51,1107.50 L1089.88,1106.54 L1093.24,1105.58 L1096.60,1104.62 L1099.96,1103.66 L1103.33,1102.70 L1106.69,1101.74 L1110.05,1100.78" fill="none" stroke="#33c400" stroke-width="6" stroke-linejoin="round"/>
<text transform="translate(1373.67,786.97) scale(1.0037,1)" font-size="53.06" font-weight="bold" fill="#a8a8a8" letter-spacing="1.59">Attack</text>
<text transform="translate(1898.59,786.81) scale(0.9777,1)" font-size="54.93" font-weight="bold" fill="#fff" letter-spacing="1.65">30m</text>
<rect x="1370.00" y="846.90" width="640.00" height="47.00" rx="23.50" fill="#353535"/>
<path d="M1393.50,846.90 H1531.00 V893.90 H1393.50 A23.5,23.5 0 0 1 1393.50,846.90 Z" fill="url(#gSliderL)"/>
<g filter="url(#fKnob)">
<circle cx="1531.00" cy="870.40" r="43.00" fill="url(#gKnob)"/>
</g>
<circle cx="1531.00" cy="870.40" r="10.00" fill="#454545"/>
<text transform="translate(1371.68,1008.07) scale(0.9277,1)" font-size="53.06" font-weight="bold" fill="#a8a8a8" letter-spacing="1.59">Release</text>
<text transform="translate(1863.77,1008.05) scale(0.9981,1)" font-size="55.12" font-weight="bold" fill="#fff" letter-spacing="1.65">256m</text>
<rect x="1370.00" y="1068.00" width="640.00" height="47.00" rx="23.50" fill="#353535"/>
<path d="M1393.50,1068.00 H1561.00 V1115.00 H1393.50 A23.5,23.5 0 0 1 1393.50,1068.00 Z" fill="url(#gSliderL)"/>
<g filter="url(#fKnob)">
<circle cx="1561.00" cy="1091.50" r="43.00" fill="url(#gKnob)"/>
</g>
<circle cx="1561.00" cy="1091.50" r="10.00" fill="#454545"/>
<text transform="translate(1372.92,1228.07) scale(0.9818,1)" font-size="53.06" font-weight="bold" fill="#a8a8a8" letter-spacing="1.59">Out Gain</text>
<text transform="translate(1883.98,1227.91) scale(1.0776,1)" font-size="54.93" font-weight="bold" fill="#fff" letter-spacing="1.65">+6.3</text>
<rect x="1370.00" y="1288.00" width="640.00" height="47.00" rx="23.50" fill="#353535"/>
<path d="M1393.50,1288.00 H1595.00 V1335.00 H1393.50 A23.5,23.5 0 0 1 1393.50,1288.00 Z" fill="url(#gSliderL)"/>
<g filter="url(#fKnob)">
<circle cx="1595.00" cy="1311.50" r="43.00" fill="url(#gKnob)"/>
</g>
<circle cx="1595.00" cy="1311.50" r="10.00" fill="#454545"/>
<text transform="translate(1405.98,1477.93) scale(0.8680,1)" font-size="56.63" font-weight="bold" fill="#a8a8a8" letter-spacing="1.70">Knee</text>
<path d="M1471,1511.6 H1590.5 V1634.6 H1471 A61.5,61.5 0 0 1 1471,1511.6 Z" fill="#484848"/>
<rect x="1599.60" y="1511.60" width="180.60" height="123.00" rx="0.00" fill="url(#gLight)"/>
<path d="M1789.3,1511.6 H1909 A61.5,61.5 0 0 1 1909,1634.6 H1789.3 Z" fill="#484848"/>
<text transform="translate(1441.32,1593.75) scale(1.0228,1)" font-size="54.83" font-weight="bold" fill="#fff" letter-spacing="1.64">Soft</text>
<text transform="translate(1635.47,1593.75) scale(0.9528,1)" font-size="54.83" font-weight="bold" fill="#000" letter-spacing="1.64">Med</text>
<text transform="translate(1816.41,1593.75) scale(0.9694,1)" font-size="54.83" font-weight="bold" fill="#fff" letter-spacing="1.64">Hard</text>
<rect x="0.00" y="1877.00" width="2732.00" height="171.00" rx="0.00" fill="#333333"/>
<path d="M14.5,1877 H774 V2018 A30,30 0 0 1 744,2048 H44.5 A30,30 0 0 1 14.5,2018 Z" fill="url(#gNameBar)"/>
<clipPath id="cpName"><path d="M14.5,1877 H774 V2018 A30,30 0 0 1 744,2048 H44.5 A30,30 0 0 1 14.5,2018 Z"/></clipPath>
<rect x="14.50" y="2022.00" width="760.00" height="26.00" rx="0.00" fill="url(#gPurple)" clip-path="url(#cpName)"/>
<rect x="14.50" y="1877.00" width="760.00" height="2.00" rx="0.00" fill="#f4f4f4"/>
<text transform="translate(149.28,1932.22) scale(0.8857,1)" font-size="47.92" fill="#111" letter-spacing="3.35" stroke="#111" stroke-width="1.05">CH12</text>
<text transform="translate(331.16,1997.38) scale(0.8034,1)" font-size="61.65" font-weight="bold" fill="#080808" letter-spacing="1.85">Bass</text>
<g transform="translate(500,1880) scale(0.07839)" fill="#c8b0d8">
<path d="M1330,395 L745,965 C700,930 690,830 760,770 C650,780 580,880 560,990 C470,1020 300,1060 240,1180 C190,1290 250,1440 380,1530 C470,1590 600,1570 660,1500 C720,1430 730,1320 790,1270 C840,1240 880,1230 880,1190 C860,1160 790,1180 760,1150 C740,1120 745,1095 770,1075 L1365,430 C1420,420 1460,400 1500,340 C1540,290 1600,260 1615,235 C1625,210 1590,180 1550,185 L1300,270 C1295,320 1315,360 1330,395 Z" fill="#c8b0d8"/>
<circle cx="1310.00" cy="275.00" r="32.00" fill="#c8b0d8"/>
<circle cx="1380.00" cy="228.00" r="32.00" fill="#c8b0d8"/>
<circle cx="1445.00" cy="185.00" r="32.00" fill="#c8b0d8"/>
<circle cx="1512.00" cy="142.00" r="32.00" fill="#c8b0d8"/>
</g>
<path d="M64.5,1962 L79,1948.5 M64.5,1962 L79,1975.6" fill="none" stroke="#8a8a8a" stroke-width="3.5"/>
<path d="M722,1962 L708,1948.5 M722,1962 L708,1975.6" fill="none" stroke="#8a8a8a" stroke-width="3.2"/>
<rect x="788.00" y="1877.00" width="2.00" height="171.00" rx="0.00" fill="#2a2a2a"/>
<rect x="790.00" y="1877.00" width="1.00" height="171.00" rx="0.00" fill="#3e3e3e"/>
<path d="M797,1877 H990.8 V2009 A23,23 0 0 1 967.8,2032 H820 A23,23 0 0 1 797,2009 Z" fill="#484848"/>
<path d="M1008.70,1877 H1203.00 V1985.4 H1033.70 A25,25 0 0 1 1008.70,1960.4 Z" fill="#484848"/>
<rect x="1213.00" y="1877.00" width="193.60" height="108.40" rx="0.00" fill="#484848"/>
<rect x="1417.00" y="1877.00" width="194.00" height="108.40" rx="0.00" fill="#484848"/>
<rect x="1620.50" y="1877.00" width="194.50" height="108.40" rx="0.00" fill="url(#gNavSel)"/>
<rect x="1824.80" y="1877.00" width="105.90" height="108.40" rx="0.00" fill="#484848"/>
<path d="M1946.60,1877 H2140.80 V1950.4 A35,35 0 0 1 2105.80,1985.4 H1981.60 A35,35 0 0 1 1946.60,1950.4 Z" fill="#484848"/>
<clipPath id="cpNav"><rect x="0" y="1877" width="2732" height="171"/></clipPath>
<g clip-path="url(#cpNav)">
<path d="M793,1907 L837,1873 L881,1907" fill="none" stroke="#565656" stroke-width="10"/>
<path d="M805,1898 L837,1874 L867,1898 V1944 H849 V1916 H826 V1944 H805 Z" fill="#565656"/>
<rect x="1009.50" y="1910.20" width="22.00" height="7.60" rx="0.00" fill="#5a5a5a"/>
<path d="M1028.5,1899.4 L1048.4,1914 L1028.5,1928.9 Z" fill="#5a5a5a"/>
<rect x="1049.70" y="1870.00" width="6.60" height="82.60" rx="3.30" fill="#5a5a5a"/>
<rect x="1043.40" y="1900.40" width="19.30" height="30.40" rx="3.00" fill="#5a5a5a"/>
<rect x="1075.10" y="1870.00" width="6.60" height="82.60" rx="3.30" fill="#5a5a5a"/>
<rect x="1068.80" y="1900.40" width="19.30" height="30.40" rx="3.00" fill="#5a5a5a"/>
<rect x="1100.20" y="1870.00" width="6.60" height="82.60" rx="3.30" fill="#5a5a5a"/>
<rect x="1093.90" y="1900.40" width="19.30" height="30.40" rx="3.00" fill="#5a5a5a"/>
<path d="M1213.6,1891 C1226,1895 1232,1925 1239.2,1937.4 L1263.9,1888 L1286.7,1937 C1293,1918 1300,1893 1313.3,1890" fill="none" stroke="#5a5a5a" stroke-width="6"/>
<circle cx="1239.20" cy="1937.40" r="10.00" fill="#5a5a5a"/>
<circle cx="1263.90" cy="1888.00" r="10.00" fill="#5a5a5a"/>
<circle cx="1313.30" cy="1890.00" r="4.50" fill="#5a5a5a"/>
<g transform="translate(-208.40,0)">
<rect x="1626.80" y="1870.00" width="10.70" height="77.60" rx="0.00" fill="#5a5a5a"/>
<rect x="1626.80" y="1937.00" width="57.00" height="10.60" rx="0.00" fill="#5a5a5a"/>
<path d="M1632,1940 L1659.2,1898.4 L1692.7,1890" fill="none" stroke="#5a5a5a" stroke-width="5.5"/>
<circle cx="1659.20" cy="1898.40" r="9.00" fill="#5a5a5a"/>
</g>
<g transform="translate(0.00,0)">
<rect x="1626.80" y="1870.00" width="10.70" height="77.60" rx="0.00" fill="#bcbcbc"/>
<rect x="1626.80" y="1937.00" width="57.00" height="10.60" rx="0.00" fill="#bcbcbc"/>
<path d="M1632,1940 L1659.2,1898.4 L1692.7,1890" fill="none" stroke="#bcbcbc" stroke-width="5.5"/>
<circle cx="1659.20" cy="1898.40" r="9.00" fill="#bcbcbc"/>
</g>
<path d="M1828,1888.4 H1880 M1851.6,1888.4 V1912 H1880" fill="none" stroke="#5a5a5a" stroke-width="6"/>
<path d="M1876,1879 L1891,1888.4 L1876,1898 Z M1876,1902.5 L1891,1912 L1876,1921.5 Z" fill="#5a5a5a"/>
<rect x="1953.60" y="1860.00" width="75.40" height="85.30" rx="6.00" fill="#555555"/>
<rect x="1953.60" y="1929.00" width="75.40" height="2.50" rx="0.00" fill="#4a4a4a"/>
<circle cx="1974.70" cy="1903.50" r="4.20" fill="#454545"/>
<circle cx="1992.00" cy="1903.50" r="4.20" fill="#454545"/>
<circle cx="2009.60" cy="1903.50" r="4.20" fill="#454545"/>
</g>
<text transform="translate(820.85,1979.16) scale(0.8700,1)" font-size="53.57" font-weight="bold" fill="#fff" letter-spacing="1.61">HOME</text>
<text transform="translate(1041.26,1952.60) scale(0.8299,1)" font-size="48.87" font-weight="bold" fill="#fff" letter-spacing="1.47">INPUT</text>
<text transform="translate(1279.95,1952.60) scale(0.8334,1)" font-size="48.87" font-weight="bold" fill="#fff" letter-spacing="1.47">EQ</text>
<text transform="translate(1459.25,1952.60) scale(0.7906,1)" font-size="48.87" font-weight="bold" fill="#fff" letter-spacing="1.47">GATE</text>
<text transform="translate(1656.12,1952.60) scale(0.8083,1)" font-size="48.87" font-weight="bold" fill="#000" letter-spacing="1.47">COMP</text>
<clipPath id="cpSend"><rect x="1824.8" y="1877" width="106" height="110"/></clipPath>
<g clip-path="url(#cpSend)">
<text transform="translate(1832.33,1952.13) scale(0.8226,1)" font-size="47.49" font-weight="bold" fill="#fff" letter-spacing="1.42">SEND</text>
</g>
<text transform="translate(1980.89,1952.60) scale(0.8205,1)" font-size="48.87" font-weight="bold" fill="#fff" letter-spacing="1.47">NAME</text>
<rect x="2155.00" y="1877.00" width="2.20" height="171.00" rx="0.00" fill="#6a6a6a"/>
<rect x="2178.80" y="1889.00" width="179.90" height="36.00" rx="18.00" fill="#ffffff"/>
<rect x="2376.90" y="1889.00" width="179.80" height="36.00" rx="18.00" fill="#ffffff"/>
<text transform="translate(2238.13,1918.80) scale(0.8674,1)" font-size="33.16" fill="#000" letter-spacing="2.32" stroke="#000" stroke-width="0.73">FX1</text>
<text transform="translate(2436.03,1918.80) scale(0.9144,1)" font-size="32.69" fill="#000" letter-spacing="2.29" stroke="#000" stroke-width="0.72">FX2</text>
<rect x="2181.00" y="1938.00" width="173.00" height="96.50" rx="48.25" fill="#4d4d4d"/>
<rect x="2379.00" y="1938.00" width="173.00" height="96.50" rx="48.25" fill="#4d4d4d"/>
<text transform="translate(2219.24,2004.60) scale(0.8745,1)" font-size="46.69" font-weight="bold" fill="#fff" letter-spacing="1.40">EDIT</text>
<text transform="translate(2417.24,2004.60) scale(0.8745,1)" font-size="46.69" font-weight="bold" fill="#fff" letter-spacing="1.40">EDIT</text>
<rect x="2566.00" y="1877.00" width="111.00" height="171.00" rx="0.00" fill="url(#gShadowR)"/>
<rect x="2676.60" y="1877.00" width="56.00" height="171.00" rx="0.00" fill="#444444"/>
<circle cx="2682.50" cy="1959.50" r="52.00" fill="#444444"/>
<path d="M2650,1959 L2677,1941.6 V1976.4 Z" fill="#fff"/>
</svg>
</body></html>
